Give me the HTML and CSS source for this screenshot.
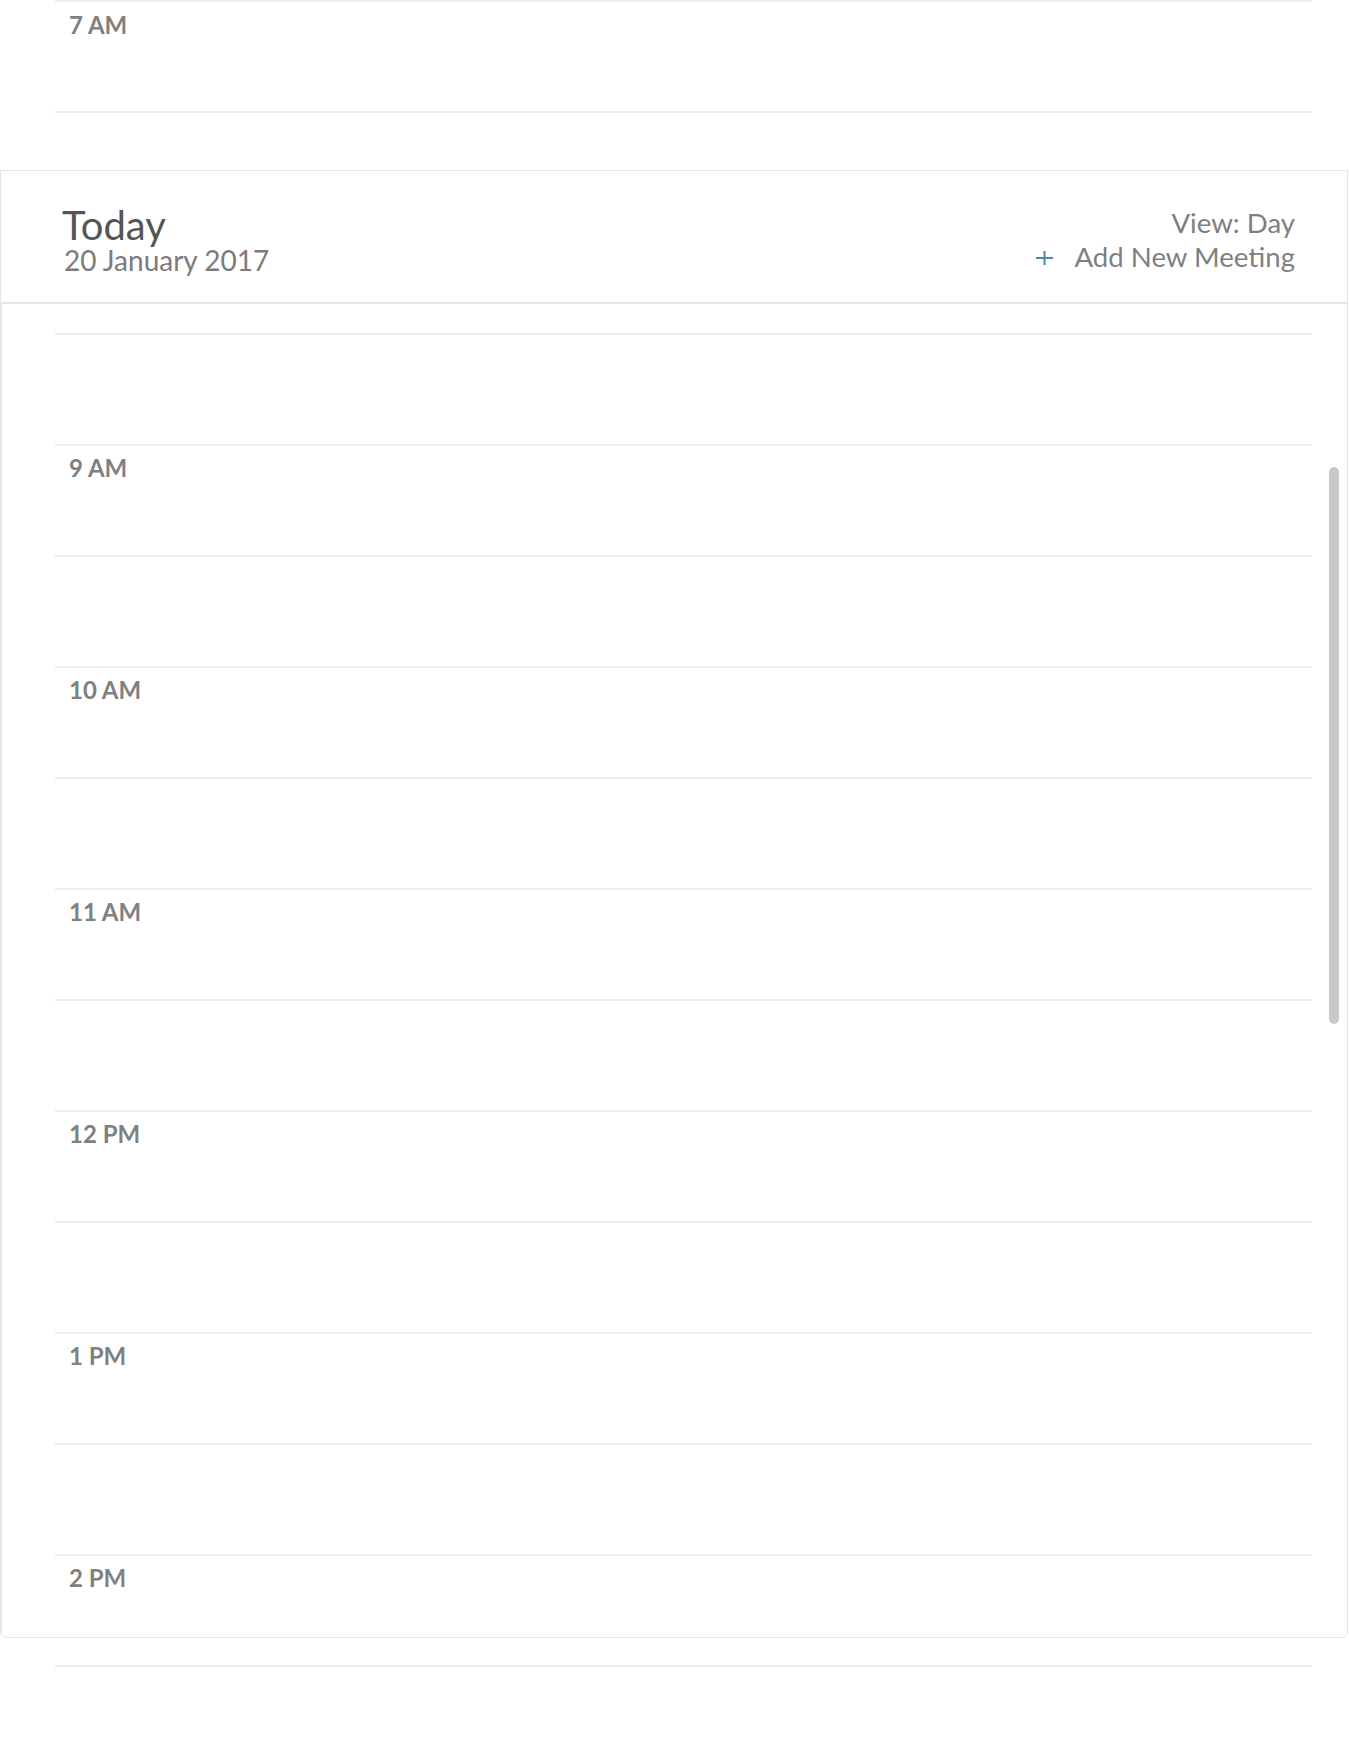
FILE: index.html
```html
<!DOCTYPE html>
<html lang="en">
<head>
<meta charset="utf-8">
<title>Calendar - Day view</title>
<link rel="stylesheet" href="styles.css">
</head>
<body>
<div class="page">
  <div class="timeline timeline-bg">
    <div class="slot"><span class="hour">7 AM</span></div>
    <div class="slot"></div>
    <div class="slot"><span class="hour">8 AM</span></div>
    <div class="slot"></div>
    <div class="slot"><span class="hour">9 AM</span></div>
    <div class="slot"></div>
    <div class="slot"><span class="hour">10 AM</span></div>
    <div class="slot"></div>
    <div class="slot"><span class="hour">11 AM</span></div>
    <div class="slot"></div>
    <div class="slot"><span class="hour">12 PM</span></div>
    <div class="slot"></div>
    <div class="slot"><span class="hour">1 PM</span></div>
    <div class="slot"></div>
    <div class="slot"><span class="hour">2 PM</span></div>
    <div class="slot"></div>
    <div class="slot"><span class="hour">3 PM</span></div>
  </div>

  <section class="panel">
    <header class="panel-head">
      <div class="title-block">
        <h1 class="title">Today</h1>
        <div class="date">20 January 2017</div>
      </div>
      <div class="actions">
        <div class="view">View: Day</div>
        <a class="add" href="#">
          <svg class="plus" width="17" height="16" viewBox="0 0 17 16" aria-hidden="true">
            <path d="M0 8H17M8.5 1V15" stroke="#4589ad" stroke-width="2" fill="none"/>
          </svg>
          <span>Add New Meeting</span>
        </a>
      </div>
    </header>
    <div class="panel-body">
      <div class="timeline">
        <div class="slot"></div>
        <div class="slot"><span class="hour">9 AM</span></div>
        <div class="slot"></div>
        <div class="slot"><span class="hour">10 AM</span></div>
        <div class="slot"></div>
        <div class="slot"><span class="hour">11 AM</span></div>
        <div class="slot"></div>
        <div class="slot"><span class="hour">12 PM</span></div>
        <div class="slot"></div>
        <div class="slot"><span class="hour">1 PM</span></div>
        <div class="slot"></div>
        <div class="slot"><span class="hour">2 PM</span></div>
        <div class="slot"></div>
      </div>
    </div>
    <div class="scroll-thumb"></div>
  </section>
</div>
</body>
</html>
```

FILE: styles.css
```css
* {
  box-sizing: border-box;
}

html, body {
  margin: 0;
  padding: 0;
  background: #ffffff;
  font-family: Lato, "Open Sans", "Liberation Sans", sans-serif;
  overflow: hidden;
}

.page {
  position: relative;
  width: 1349px;
  height: 1743px;
  overflow: hidden;
}

.timeline-bg {
  margin-left: 55px;
  width: 1257px;
}

.slot {
  height: 111px;
  border-top: 2px solid #ececec;
  padding: 8px 0 0 14px;
}

.hour {
  display: block;
  font-size: 24px;
  line-height: 1.2;
  font-weight: 700;
  color: #808080;
}

.timeline-bg .slot:first-child {
  padding-top: 9px;
}

.panel {
  position: absolute;
  top: 170px;
  left: 0;
  width: 1348px;
  height: 1468px;
  background: #ffffff;
  border: 1px solid #e6e6e6;
  border-radius: 0 0 6px 6px;
  display: flex;
  flex-direction: column;
  overflow: hidden;
}

.panel-head {
  height: 133px;
  flex: none;
  display: flex;
  justify-content: space-between;
  align-items: flex-start;
  padding: 34px 52px 0 61px;
  border-bottom: 2px solid #e6e6e6;
}

.title {
  margin: 0;
  font-size: 40px;
  line-height: 40px;
  font-weight: 400;
  color: #555555;
}

.date {
  margin-left: 2px;
  font-size: 28px;
  line-height: 30px;
  color: #7b7b7b;
}

.actions {
  margin-top: 1px;
  display: flex;
  flex-direction: column;
  align-items: flex-end;
  font-size: 27.6px;
  line-height: 34px;
  color: #7f7f7f;
}

.add {
  display: flex;
  align-items: center;
  gap: 21px;
  color: #7f7f7f;
  text-decoration: none;
}

.plus {
  display: block;
  margin-top: 2px;
}

.panel-body {
  flex: 1;
  overflow: hidden;
  border-left: 1px solid #e6e6e6;
  padding: 29px 35px 0 53px;
}

.scroll-thumb {
  position: absolute;
  top: 296px;
  right: 8px;
  width: 10px;
  height: 557px;
  border-radius: 5px;
  background: #c8c8c8;
}
```
